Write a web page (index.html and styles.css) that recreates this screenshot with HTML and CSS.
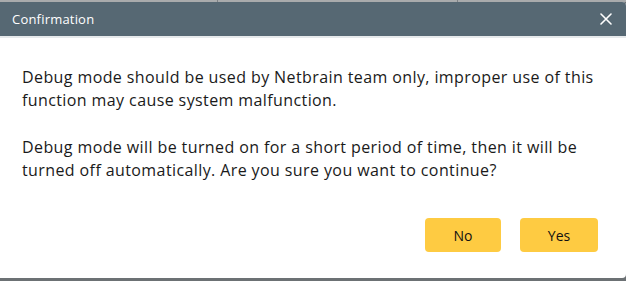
FILE: index.html
```html
<!DOCTYPE html>
<html lang="en">
<head>
    <meta charset="UTF-8">
    <title>Confirmation</title>
    <link rel="stylesheet" href="styles.css">
</head>
<body>
    <div class="backdrop-top">
        <span class="col-line"></span>
        <span class="col-line"></span>
    </div>
    <div class="dialog">
        <div class="dialog-header">
            <span class="dialog-title">Confirmation</span>
            <button type="button" class="close-btn" aria-label="Close">
                <svg width="12" height="12" viewBox="0 0 12 12">
                    <path d="M1 1 L11 11 M11 1 L1 11" stroke="#ffffff" stroke-width="1.6" stroke-linecap="round"/>
                </svg>
            </button>
        </div>
        <div class="dialog-body">
            <p>Debug mode should be used by Netbrain team only, improper use of this function may cause system malfunction.</p>
            <p>Debug mode will be turned on for a short period of time, then it will be turned off automatically. Are you sure you want to continue?</p>
        </div>
        <div class="dialog-footer">
            <button type="button" class="button">No</button>
            <button type="button" class="button">Yes</button>
        </div>
    </div>
</body>
</html>
```

FILE: styles.css
```css
body {
    margin: 0;
    padding: 0;
    width: 626px;
    height: 281px;
    overflow: hidden;
    background: #6c7174;
    font-family: "Open Sans", "Noto Sans", sans-serif;
}

.backdrop-top {
    height: 2px;
    background: #a9abac;
    display: flex;
}

.backdrop-top .col-line {
    width: 1px;
    height: 2px;
    background: #7d8184;
}

.backdrop-top .col-line:first-child {
    margin-left: 217px;
}

.backdrop-top .col-line:last-child {
    margin-left: 239px;
}

.dialog {
    background: #ffffff;
    height: 276px;
    border-radius: 0 4px 4px 0;
    display: flex;
    flex-direction: column;
}

.dialog-header {
    height: 34px;
    background: #566873;
    border-bottom: 2px solid #e6e9eb;
    border-top-right-radius: 4px;
    display: flex;
    align-items: center;
    justify-content: space-between;
    padding: 0 12px;
}

.dialog-title {
    color: #ffffff;
    font-size: 13px;
    letter-spacing: 0.2px;
}

.close-btn {
    background: none;
    border: none;
    padding: 0;
    margin-right: 2px;
    display: flex;
    cursor: pointer;
}

.dialog-body {
    padding: 28px 26px 0 22px;
    color: #1a1a1a;
    font-size: 16px;
    letter-spacing: 0.4px;
    line-height: 23px;
}

.dialog-body p {
    margin: 0 0 24px;
}

.dialog-footer {
    display: flex;
    justify-content: flex-end;
    gap: 19px;
    padding: 12px 28px 0;
}

.button {
    width: 76px;
    height: 34px;
    background: #fecb42;
    border: none;
    border-radius: 4px;
    font-family: inherit;
    font-size: 14px;
    color: #111;
    cursor: pointer;
}

.button:last-child {
    width: 78px;
}
```
